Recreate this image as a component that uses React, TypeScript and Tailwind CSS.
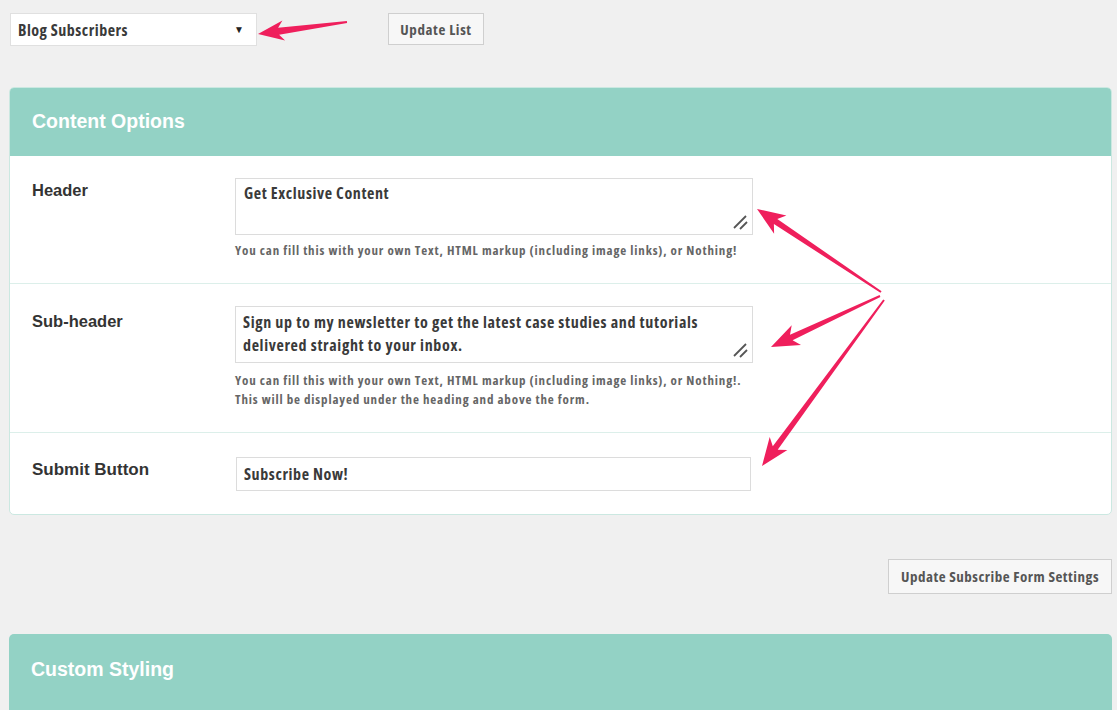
import React from "react";

const cond = { fontFamily: '"Open Sans", "Liberation Sans", sans-serif', fontStretch: "75%" } as React.CSSProperties;
const arial = { fontFamily: '"Liberation Sans", Arial, sans-serif' } as React.CSSProperties;

function arrowPoints(tx: number, ty: number, hx: number, hy: number, tailW: number, neckW: number, headLen: number, headW: number) {
  const dx = hx - tx;
  const dy = hy - ty;
  const len = Math.hypot(dx, dy);
  const ux = dx / len;
  const uy = dy / len;
  const px = -uy;
  const py = ux;
  const nx = hx - ux * headLen;
  const ny = hy - uy * headLen;
  const bx = hx - ux * headLen * 0.8;
  const by = hy - uy * headLen * 0.8;
  const pts = [
    [tx + px * tailW / 2, ty + py * tailW / 2],
    [bx + px * neckW / 2, by + py * neckW / 2],
    [nx + px * headW / 2, ny + py * headW / 2],
    [hx, hy],
    [nx - px * headW / 2, ny - py * headW / 2],
    [bx - px * neckW / 2, by - py * neckW / 2],
    [tx - px * tailW / 2, ty - py * tailW / 2],
  ];
  return pts.map((p) => p.map((v) => v.toFixed(1)).join(",")).join(" ");
}

function Grip() {
  return (
    <svg className="absolute right-[4px] bottom-[4px]" width="16" height="16" viewBox="0 0 16 16">
      <line x1="2" y1="14" x2="14" y2="2" stroke="#555" strokeWidth="1.8" />
      <line x1="8" y1="15" x2="15" y2="8" stroke="#555" strokeWidth="1.8" />
    </svg>
  );
}

export default function App() {
  return (
    <div className="relative w-[1117px] h-[710px] overflow-hidden bg-[#f0f0f0]">
      {/* top bar */}
      <div className="flex items-start pt-[13px] pl-[10px]">
        <div className="w-[247px] h-[33px] bg-white border border-[#e0e0e0] flex items-center justify-between pl-[7px] pr-[12px]">
          <span className="text-[16px] font-bold text-[#3a3a3a] tracking-[0.5px]" style={cond}>Blog Subscribers</span>
          <span className="text-[10px] text-[#222]">▼</span>
        </div>
        <div className="ml-[131px] w-[96px] h-[32px] bg-[#f7f7f7] border border-[#cfcfcf] flex items-center justify-center">
          <span className="text-[15px] font-bold text-[#555] tracking-[0.6px]" style={cond}>Update List</span>
        </div>
      </div>

      {/* content options panel */}
      <div className="mt-[41px] ml-[9px] mr-[5px] rounded-[5px] border border-[#cbe8e1] bg-white overflow-hidden">
        <div className="h-[68px] bg-[#93d2c5] flex items-center pl-[22px]">
          <span className="text-[19.5px] font-bold text-white" style={arial}>Content Options</span>
        </div>

        {/* Header row */}
        <div className="flex h-[128px] border-b border-[#dcefea] pt-[22px]">
          <div className="w-[225px] pl-[22px] text-[16.5px] font-bold text-[#333]" style={arial}>Header</div>
          <div className="flex flex-col">
            <div className="relative w-[518px] h-[57px] border border-[#dcdcdc] bg-white pl-[8px] pt-[2px]">
              <span className="text-[16px] font-bold text-[#3a3a3a] tracking-[0.6px]" style={cond}>Get Exclusive Content</span>
              <Grip />
            </div>
            <div className="mt-[6px] text-[13px] font-bold text-[#666] leading-[19px] tracking-[0.85px]" style={cond}>
              You can fill this with your own Text, HTML markup (including image links), or Nothing!
            </div>
          </div>
        </div>

        {/* Sub-header row */}
        <div className="flex h-[149px] border-b border-[#dcefea] pt-[22px]">
          <div className="w-[225px] pl-[22px] pt-[3px] text-[16.5px] font-bold text-[#333]" style={arial}>Sub-header</div>
          <div className="flex flex-col">
            <div className="relative w-[518px] h-[57px] border border-[#dcdcdc] bg-white pl-[7px] pt-[4px] leading-[23px]">
              <span className="text-[16px] font-bold text-[#3a3a3a] tracking-[0.65px]" style={cond}>Sign up to my newsletter to get the latest case studies and tutorials<br />delivered straight to your inbox.</span>
              <Grip />
            </div>
            <div className="mt-[8px] text-[13px] font-bold text-[#666] leading-[19px] tracking-[0.85px]" style={cond}>
              You can fill this with your own Text, HTML markup (including image links), or Nothing!.<br />
              This will be displayed under the heading and above the form.
            </div>
          </div>
        </div>

        {/* Submit row */}
        <div className="flex h-[81px] pt-[24px]">
          <div className="w-[226px] pl-[22px] text-[17px] font-bold text-[#333]" style={arial}>Submit Button</div>
          <div className="w-[515px] h-[34px] border border-[#dcdcdc] bg-white pl-[7px] flex items-center">
            <span className="text-[16px] font-bold text-[#3a3a3a] tracking-[0.6px]" style={cond}>Subscribe Now!</span>
          </div>
        </div>
      </div>

      {/* save button */}
      <div className="flex justify-end mt-[44px] mr-[5px]">
        <div className="w-[224px] h-[35px] bg-[#f7f7f7] border border-[#cfcfcf] flex items-center justify-center">
          <span className="text-[15px] font-bold text-[#555] tracking-[0.5px]" style={cond}>Update Subscribe Form Settings</span>
        </div>
      </div>

      {/* custom styling panel */}
      <div className="mt-[40px] ml-[9px] mr-[5px] rounded-t-[5px] bg-[#93d2c5] h-[80px] flex items-start pt-[21px] pl-[22px]">
        <span className="text-[19.5px] font-bold text-white" style={arial}>Custom Styling</span>
      </div>

      {/* annotation arrows */}
      <svg className="absolute inset-0 pointer-events-none" width="1117" height="710">
        <g fill="#ef1f5c">
          <polygon points={arrowPoints(347, 22, 258, 34, 2, 7, 26, 20)} />
          <polygon points={arrowPoints(881, 292, 757, 209, 2, 6, 28, 22)} />
          <polygon points={arrowPoints(880, 296, 771, 347, 2, 6, 28, 22)} />
          <polygon points={arrowPoints(884, 300, 762, 466, 2, 6, 28, 22)} />
        </g>
      </svg>
    </div>
  );
}
